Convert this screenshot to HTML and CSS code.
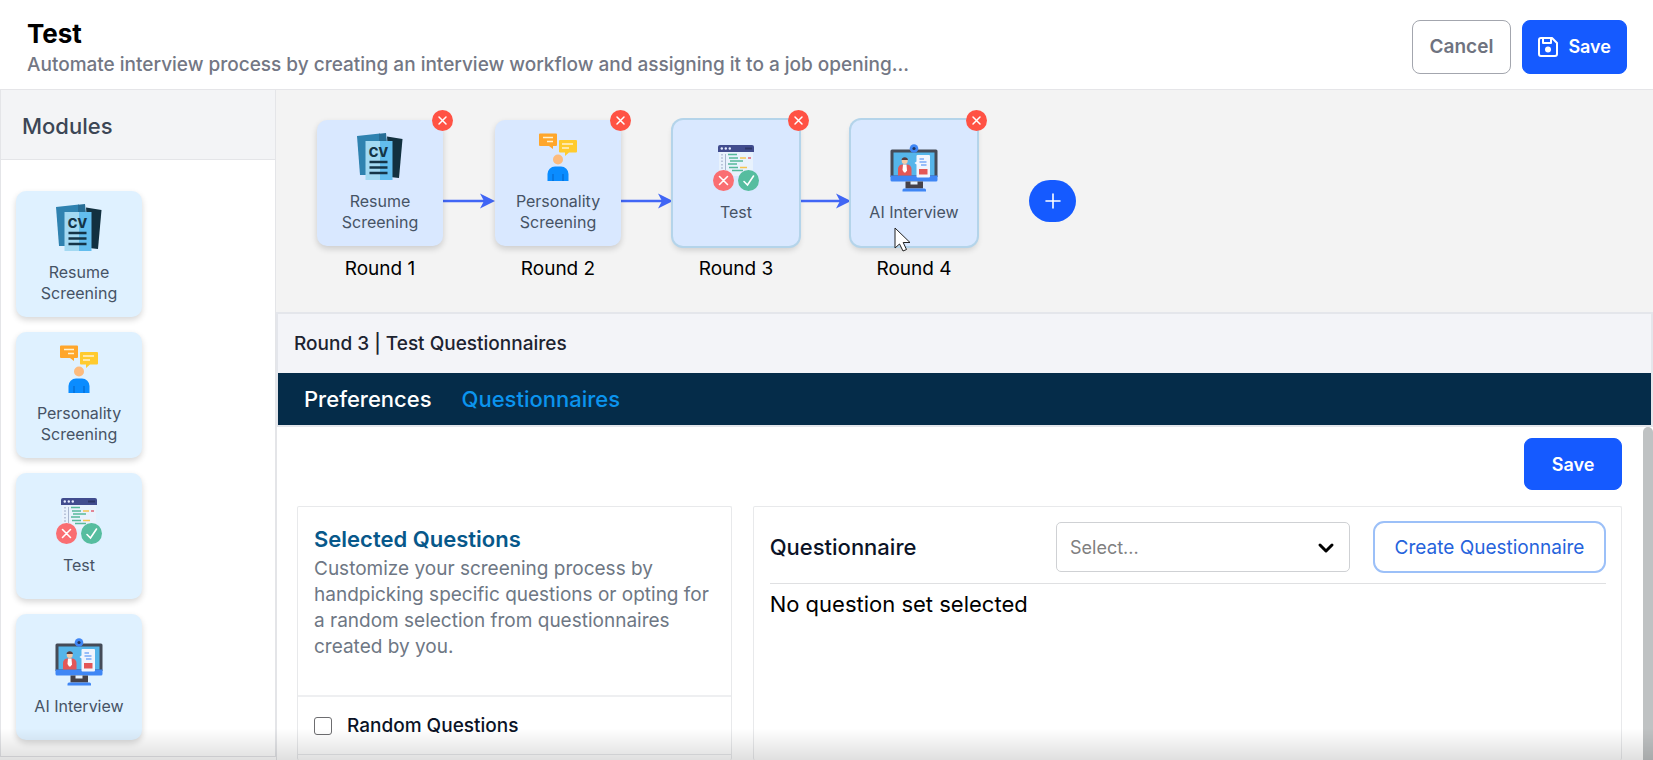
FILE: index.html
```html
<!DOCTYPE html>
<html lang="en">
<head>
<meta charset="utf-8">
<meta name="viewport" content="width=device-width, initial-scale=1">
<title>Test workflow</title>
<link rel="stylesheet" href="styles.css">
</head>
<body>
<svg class="sprite" aria-hidden="true">
  <symbol id="resume" viewBox="0 0 48 48">
    <path fill="#2f82b0" d="M1 3 24 .6V42H4z"/>
    <path fill="#276d95" d="M23 .7 30 0l1 10H23z"/>
    <path fill="#12303f" d="M31 3.500 46.500 6 43 45l-9-1z"/>
    <path fill="#a3d9f2" d="M9.500 8H24v39H9.500z"/>
    <path fill="#62bdee" d="M24 8h12.500v39H24z"/>
    <path stroke="#143447" stroke-width="2.600" d="M13.500 29h18M13.500 34.500h18M13.500 40h18"/>
  </symbol>
  <symbol id="person" viewBox="0 0 48 48">
    <path fill="#ffa62b" d="M6 .5h16a1 1 0 0 1 1 1V12a1 1 0 0 1-1 1h-3v3l-4-3H6a1 1 0 0 1-1-1V1.500a1 1 0 0 1 1-1z"/>
    <path fill="#ffcb2e" d="M26 7h16a1 1 0 0 1 1 1v10.500a1 1 0 0 1-1 1h-7L31 23v-3.500h-5a1 1 0 0 1-1-1V8a1 1 0 0 1 1-1z"/>
    <path stroke="#fff2cf" stroke-width="1.500" d="M9 4.500h10M13 8.500h6M28 11h11M28 15h7"/>
    <circle cx="24" cy="26.500" r="5" fill="#fdbb7d"/>
    <path fill="#0a8cff" d="M13.500 48v-7a7.500 7.500 0 0 1 7.500-7.500h6a7.500 7.500 0 0 1 7.500 7.500v7z"/>
    <path stroke="#0563c4" d="M19 41v7M29 41v7"/>
  </symbol>
  <symbol id="quiz" viewBox="0 0 48 48">
    <path fill="#e8f2fd" d="M7 7h34v25H7z"/>
    <path fill="#414c8e" d="M8 1h32a2 2 0 0 1 2 2v5H6V3a2 2 0 0 1 2-2z"/>
    <path fill="#2e3668" d="M33 3.500h7v2h-7z"/>
    <g fill="#e6ecff"><circle cx="9.800" cy="4.500" r="1.200"/><circle cx="13.800" cy="4.500" r="1.200"/><circle cx="17.800" cy="4.500" r="1.200"/></g>
    <path stroke="#a9b6cf" stroke-width="1.500" stroke-dasharray="1.500 1.800" d="M10 10v16"/>
    <path stroke="#a9b6cf" d="M13.500 10v16"/>
    <path stroke="#56b99b" stroke-width="1.600" d="M16 10.500h9M17 14h9M18 17h13M16 20h9M17 23.500h9M20 26.500h11"/>
    <path stroke="#f5c451" stroke-width="1.600" d="M28 14h6M28 23.500h7"/>
    <path stroke="#e06a7c" stroke-width="1.600" d="M36 14h3"/>
    <circle cx="11.500" cy="36.500" r="10.500" fill="#fa6e72"/>
    <circle cx="36.500" cy="36.500" r="10.500" fill="#56bd9f"/>
    <path fill="none" stroke="#fff" stroke-width="1.600" stroke-linecap="round" d="m7.500 32.500 8 8m0-8-8 8M32 37.500l3.500 3.500 6-9"/>
  </symbol>
  <symbol id="monitor" viewBox="0 0 48 48">
    <path fill="#454b57" d="M2 5.500h44A1.500 1.500 0 0 1 47.500 7v26H.5V7A1.500 1.500 0 0 1 2 5.500z"/>
    <path fill="#55b5ea" d="M3.500 8.500h41v23h-41z"/>
    <path fill="#3f86f5" d="M.5 31.500h47V36a1.500 1.500 0 0 1-1.500 1.500H2A1.500 1.500 0 0 1 .5 36z"/>
    <path fill="#454149" d="M15.500 37.500h17.500v7H15.500z"/>
    <path fill="#e6f1fc" d="M20.500 37.500h7v3h-7z"/>
    <path fill="#3f86f5" d="M14 44.500h20.500a1.500 1.500 0 0 1 1.500 1.500v1.500H12.500V46a1.500 1.500 0 0 1 1.500-1.500z"/>
    <circle cx="24" cy="4.500" r="4.300" fill="#3f86f5"/><circle cx="24" cy="4.500" r="1.600" fill="#24345c"/>
    <path fill="#e35757" d="M8 31.500V25a4.500 4.500 0 0 1 4.500-4.500h4.500a4.500 4.500 0 0 1 4.500 4.500v6.500z"/>
    <path fill="#fff" d="M13 20.500h3.500l.5 6-1.500 2h-1.500L12.500 26z"/>
    <circle cx="14.700" cy="17" r="3" fill="#f7c9a5"/>
    <path fill="#5a3b3b" d="M11.500 16a3.300 3.300 0 0 1 6.500 0z"/>
    <path fill="#f1f5fd" d="M27.500 11H39a1 1 0 0 1 1 1v20.500a1 1 0 0 1-1 1H27.500a1 1 0 0 1-1-1v-12l-2-1.500 2-1.500V12a1 1 0 0 1 1-1z"/>
    <path stroke="#3f86f5" stroke-width="1.200" d="M29.500 15h4.500M29.500 18h7M31 21h5.500"/>
    <path fill="#e35757" d="M29 25h8.500v5.500H29z"/>
  </symbol>
  <symbol id="cross" viewBox="0 0 21 21">
    <path fill="none" stroke="#fff" stroke-width="1.500" stroke-linecap="round" d="m7 7 7 7m0-7-7 7"/>
  </symbol>
  <symbol id="arrow" viewBox="0 0 52 18">
    <path stroke="#4166f5" stroke-width="2.500" d="M0 9h42"/>
    <path fill="#4166f5" d="M37 1.500 52 9 37 16.500 41 9z"/>
  </symbol>
</svg>

<header class="topbar">
  <div class="heading">
    <h1 class="title">Test</h1>
    <p class="subtitle">Automate interview process by creating an interview workflow and assigning it to a job opening...</p>
  </div>
  <div class="actions">
    <button class="btn btn-plain" type="button">Cancel</button>
    <button class="btn btn-primary" type="button">
      <svg class="disk" viewBox="0 0 20 20" aria-hidden="true"><path fill="none" stroke="#fff" stroke-width="2" stroke-linejoin="round" d="M3 1h11l5 5v11a2 2 0 0 1-2 2H3a2 2 0 0 1-2-2V3a2 2 0 0 1 2-2zM5 1v5h8V1"/><circle cx="10" cy="12.500" r="3" fill="#fff"/></svg>
      Save
    </button>
  </div>
</header>

<div class="workspace">
  <aside class="sidebar">
    <h2 class="sidebar-title">Modules</h2>
    <div class="modules">
      <div class="card"><svg class="pic" viewBox="0 0 48 48" aria-hidden="true"><use href="#resume"/><text class="cv" x="22.500" y="24" text-anchor="middle">CV</text></svg><span>Resume Screening</span></div>
      <div class="card"><svg class="pic" aria-hidden="true"><use href="#person"/></svg><span>Personality Screening</span></div>
      <div class="card"><svg class="pic" aria-hidden="true"><use href="#quiz"/></svg><span>Test</span></div>
      <div class="card"><svg class="pic" aria-hidden="true"><use href="#monitor"/></svg><span>AI Interview</span></div>
    </div>
  </aside>

  <main class="main">
    <section class="flow" aria-label="Interview rounds">
      <div class="round">
        <div class="card node"><svg class="pic" viewBox="0 0 48 48" aria-hidden="true"><use href="#resume"/><text class="cv" x="22.500" y="24" text-anchor="middle">CV</text></svg><span>Resume Screening</span>
          <button class="remove" type="button" aria-label="Remove round 1"><svg class="x" aria-hidden="true"><use href="#cross"/></svg></button></div>
        <span class="round-name">Round 1</span>
      </div>
      <svg class="link" aria-hidden="true"><use href="#arrow"/></svg>
      <div class="round">
        <div class="card node"><svg class="pic" aria-hidden="true"><use href="#person"/></svg><span>Personality Screening</span>
          <button class="remove" type="button" aria-label="Remove round 2"><svg class="x" aria-hidden="true"><use href="#cross"/></svg></button></div>
        <span class="round-name">Round 2</span>
      </div>
      <svg class="link" aria-hidden="true"><use href="#arrow"/></svg>
      <div class="round">
        <div class="card node active"><svg class="pic" aria-hidden="true"><use href="#quiz"/></svg><span>Test</span>
          <button class="remove" type="button" aria-label="Remove round 3"><svg class="x" aria-hidden="true"><use href="#cross"/></svg></button></div>
        <span class="round-name">Round 3</span>
      </div>
      <svg class="link" aria-hidden="true"><use href="#arrow"/></svg>
      <div class="round">
        <div class="card node active"><svg class="pic" aria-hidden="true"><use href="#monitor"/></svg><span>AI Interview</span>
          <button class="remove" type="button" aria-label="Remove round 4"><svg class="x" aria-hidden="true"><use href="#cross"/></svg></button>
          <svg class="pointer" viewBox="0 0 17 25" aria-hidden="true"><path fill="#fff" stroke="#222" d="M1 1v20l4.500-4 3.500 7 3.500-1.500-3.300-7H16z"/></svg></div>
        <span class="round-name">Round 4</span>
      </div>
      <button class="add" type="button" aria-label="Add round"><svg class="plus" viewBox="0 0 16 16" aria-hidden="true"><path stroke="#fff" stroke-width="1.600" stroke-linecap="round" d="M8 1v14M1 8h14"/></svg></button>
    </section>

    <div class="panel-head">
      <h2 class="panel-title">Round 3 | Test Questionnaires</h2>
      <nav class="tabs">
        <a class="tab current" href="#preferences">Preferences</a>
        <a class="tab" href="#questionnaires">Questionnaires</a>
      </nav>
    </div>

    <section class="content">
      <div class="pane">
        <button class="btn btn-primary btn-save" type="button">Save</button>
        <div class="columns">
          <div class="box selected">
            <div class="intro">
              <h3 class="box-title">Selected Questions</h3>
              <p class="desc">Customize your screening process by handpicking specific questions or opting for a random selection from questionnaires created by you.</p>
            </div>
            <div class="option"><input class="tick" type="checkbox" id="random"><label for="random">Random Questions</label></div>
          </div>
          <div class="box sets">
            <div class="set-row">
              <label class="set-label" for="set">Questionnaire</label>
              <div class="picker">
                <select class="select" id="set"><option>Select...</option></select>
                <svg class="chevron" viewBox="0 0 18 12" aria-hidden="true"><path fill="none" stroke="#000" stroke-width="3" stroke-linecap="round" stroke-linejoin="round" d="m3 3 6 6 6-6"/></svg>
              </div>
              <button class="btn-create" type="button">Create Questionnaire</button>
            </div>
            <p class="empty">No question set selected</p>
          </div>
        </div>
      </div>
      <div class="scrollbar" aria-hidden="true"></div>
    </section>
  </main>
</div>
<div class="fade" aria-hidden="true"></div>
</body>
</html>
```
FILE: styles.css
```css
* { box-sizing: border-box; }
body {
  margin: 0;
  height: 100vh;
  display: flex;
  flex-direction: column;
  overflow: hidden;
  background: #fff;
  color: #000;
  font-family: Inter, "Open Sans", sans-serif;
  font-size: 19px;
}
h1, h2, h3, p { margin: 0; }
button, select, input { font: inherit; }
button { cursor: pointer; }
.sprite { position: absolute; width: 0; height: 0; }
.cv { font: 800 13px Inter, sans-serif; fill: #143447; }

.topbar {
  flex: none;
  display: flex;
  align-items: center;
  justify-content: space-between;
  padding: 16px 26px 12px 27px;
  border-bottom: 1px solid #e5e5e8;
}
.title { font-size: 26px; line-height: 36px; font-weight: 700; }
.subtitle { font-size: 19px; line-height: 25px; font-weight: 500; color: #737784; }
.actions { display: flex; gap: 11px; }
.btn {
  display: flex;
  align-items: center;
  justify-content: center;
  gap: 10px;
  height: 54px;
  padding: 0 15px;
  border: 1px solid #a3a6ae;
  border-radius: 8px;
  font-size: 18px;
  font-weight: 600;
}
.btn-plain { padding: 0 17px; background: #fff; color: #6f7380; font-size: 19px; }
.btn-primary { background: #155aff; border-color: #155aff; color: #fff; }
.disk { width: 20px; height: 20px; }

.workspace { flex: 1; min-height: 0; display: flex; }
.sidebar {
  flex: none;
  width: 276px;
  margin-bottom: 3px;
  border: solid #e4e5e8;
  border-width: 0 1px 1px;
}
.sidebar-title {
  padding: 3px 21px 0;
  font-size: 22px;
  line-height: 66px;
  font-weight: 500;
  color: #3c4655;
  background: #f3f4f6;
  border-bottom: 1px solid #e4e5e8;
}
.modules { display: flex; flex-direction: column; gap: 15px; padding: 31px 15px 0; }
.card {
  width: 126px;
  height: 126px;
  display: flex;
  flex-direction: column;
  align-items: center;
  justify-content: center;
  gap: 10px;
  border-radius: 10px;
  background: #dff1ff;
  box-shadow: 0 3px 6px rgba(0, 0, 0, .16);
  color: #465365;
  font-size: 16px;
  line-height: 21px;
  text-align: center;
}
.pic { width: 48px; height: 48px; }

.main { flex: 1; min-width: 0; display: flex; flex-direction: column; }
.flow {
  flex: none;
  display: flex;
  align-items: flex-start;
  padding: 30px 41px 31px;
  background: #f3f3f3;
}
.round { display: flex; flex-direction: column; align-items: center; gap: 11px; }
.round-name { font-size: 19px; line-height: 24px; }
.node { position: relative; background: #d9e8ff; }
.active { box-shadow: 0 0 0 2px #b4d4ea, 0 4px 6px rgba(0, 0, 0, .16); }
.remove {
  position: absolute;
  top: -10px;
  right: -10px;
  width: 21px;
  height: 21px;
  padding: 0;
  border: 0;
  border-radius: 50%;
  background: #ff5244;
}
.x { display: block; width: 21px; height: 21px; }
.link { width: 52px; height: 18px; margin-top: 72px; }
.pointer { position: absolute; left: 43px; top: 107px; width: 17px; height: 25px; }
.add {
  display: flex;
  align-items: center;
  justify-content: center;
  width: 47px;
  height: 42px;
  margin: 60px 0 0 52px;
  padding: 0;
  border: 0;
  border-radius: 21px;
  background: #155aff;
}
.plus { width: 16px; height: 16px; }

.panel-head { flex: none; border: 2px solid #e4e6eb; }
.panel-title {
  padding: 0 16px;
  font-size: 19px;
  line-height: 59px;
  font-weight: 500;
  color: #1d2330;
  background: #f3f4f8;
}
.tabs { display: flex; gap: 30px; padding: 0 26px; background: #052c49; }
.tab { font-size: 22px; line-height: 52px; font-weight: 500; color: #0b94ee; text-decoration: none; }
.current { color: #fff; }

.content { flex: 1; min-height: 0; display: flex; border-left: 1px solid #e4e5e8; overflow: hidden; }
.pane { flex: 1; min-width: 0; display: flex; flex-direction: column; padding: 11px 21px 0 20px; }
.btn-save { flex: none; align-self: flex-end; width: 98px; height: 52px; }
.scrollbar { flex: none; width: 10px; border-radius: 5px 5px 0 0; background: #bfc2c3; }
.columns {
  flex: 1;
  display: grid;
  grid-template-columns: minmax(0, 1fr) minmax(0, 2fr);
  gap: 21px;
  margin-top: 16px;
}
.box { border: 1px solid #e8e9eb; border-bottom: 0; border-radius: 2px; }
.sets { padding: 14px 15px 0 16px; }
.intro { padding: 17px 8px 35px 16px; border-bottom: 2px solid #eeeff1; }
.box-title { font-size: 22px; line-height: 30px; font-weight: 600; color: #07588a; }
.desc { margin-top: 2px; font-size: 19px; line-height: 26px; color: #6e7784; }
.option {
  display: flex;
  align-items: center;
  gap: 15px;
  height: 58px;
  padding: 0 16px;
  border-bottom: 1px solid #e8e9eb;
  font-size: 19px;
  font-weight: 500;
  color: #0b1326;
}
.tick {
  appearance: none;
  width: 18px;
  height: 18px;
  margin: 0;
  border: 1px solid #6d6d70;
  border-radius: 3px;
  background: #fff;
}
.set-row { display: flex; align-items: center; gap: 23px; padding-bottom: 10px; border-bottom: 1px solid #dfe0e2; }
.set-label { flex: 1; font-size: 22px; font-weight: 500; color: #0b1326; }
.picker { position: relative; width: 294px; }
.select {
  appearance: none;
  display: block;
  width: 100%;
  height: 50px;
  padding: 0 13px;
  border: 1px solid #cfd1d4;
  border-radius: 5px;
  background: #fff;
  color: #808080;
  font-size: 18px;
}
.chevron { position: absolute; right: 15px; top: 20px; width: 18px; height: 12px; pointer-events: none; }
.btn-create {
  height: 52px;
  width: 233px;
  padding: 0;
  border: 2px solid #9cc0f8;
  border-radius: 11px;
  background: #fff;
  color: #2563dc;
  font-size: 19px;
}
.empty { font-size: 22px; line-height: 40px; }

.fade {
  position: fixed;
  inset: auto 0 0;
  height: 32px;
  background: linear-gradient(rgba(0, 0, 0, 0), rgba(0, 0, 0, .12));
  pointer-events: none;
}
```
